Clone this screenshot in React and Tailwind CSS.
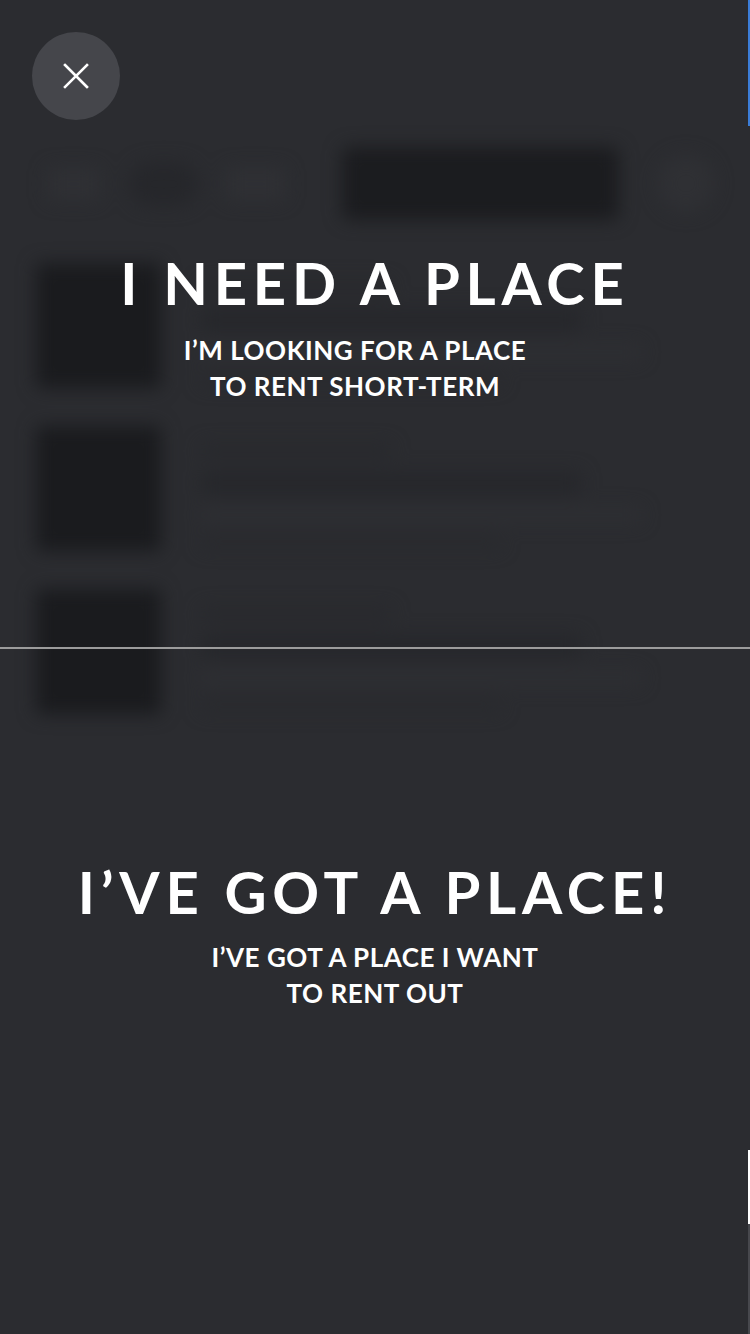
import React from 'react';

const rows = [0, 1, 2];

export default function App() {
    return (
        <div className="relative w-[750px] h-[1334px] overflow-hidden bg-[#2b2c30] font-['Lato',sans-serif]">
            {/* Blurred app behind the chooser */}
            <div className="blur-[9px] pt-[147px] px-[36px]">
                <div className="flex items-center h-[73px]">
                    <div className="w-[52px] h-[32px] ml-[12px] rounded bg-[#2f3034]"></div>
                    <div className="w-[71px] h-[44px] ml-[30px] rounded-full bg-[#26272b]"></div>
                    <div className="w-[60px] h-[32px] ml-[27px] rounded bg-[#2f3034]"></div>
                    <div className="w-[283px] h-[73px] ml-[57px] rounded-lg bg-[#1b1c1f]"></div>
                    <div className="w-[57px] h-[57px] ml-[39px] rounded-full bg-[#2f3034]"></div>
                </div>
                <div className="flex flex-col gap-[38px] mt-[43px]">
                    {rows.map((i) => (
                        <div key={i} className="flex gap-[40px]">
                            <div className="w-[125px] h-[125px] rounded bg-[#1a1b1e]"></div>
                            <div className="flex flex-col gap-[14px] pt-[18px]">
                                <div className="w-[190px] h-[14px] rounded bg-[#28292d]"></div>
                                <div className="w-[380px] h-[22px] rounded bg-[#26272b]"></div>
                                <div className="w-[440px] h-[14px] rounded bg-[#2e2f33]"></div>
                                <div className="w-[300px] h-[12px] rounded bg-[#292a2e]"></div>
                            </div>
                        </div>
                    ))}
                </div>
            </div>

            {/* Chooser overlay */}
            <div className="absolute inset-0 flex flex-col text-white">
                <button className="flex-none h-[647px] flex flex-col items-center justify-center pt-[10px]">
                    <h1 className="text-[58px] font-bold tracking-[0.1em] leading-none">I NEED A PLACE</h1>
                    <p className="mt-[20px] mr-[40px] text-[26px] font-bold tracking-[0.02em] leading-[36px]">
                        I’M LOOKING FOR A PLACE
                        <br />
                        TO RENT SHORT-TERM
                    </p>
                </button>
                <div className="h-[2px] bg-[#9c9c9c]"></div>
                <button className="flex-none h-[575px] flex flex-col items-center justify-center">
                    <h1 className="text-[58px] font-bold tracking-[0.1em] leading-none">I’VE GOT A PLACE!</h1>
                    <p className="mt-[18px] text-[26px] font-bold tracking-[0.02em] leading-[36px]">
                        I’VE GOT A PLACE I WANT
                        <br />
                        TO RENT OUT
                    </p>
                </button>
                <div className="flex-1"></div>
            </div>

            {/* Right edge slivers */}
            <div className="absolute right-0 top-0 w-[2px] h-[126px] bg-[#3b7dd8]"></div>
            <div className="absolute right-0 top-[1150px] w-[2px] h-[74px] bg-white"></div>
            <div className="absolute right-0 top-[1224px] w-[2px] h-[110px] bg-[#47484d]"></div>

            {/* Close button */}
            <button className="absolute top-[32px] left-[32px] w-[88px] h-[88px] rounded-full bg-[#45464b] flex items-center justify-center">
                <svg width="26" height="26" viewBox="0 0 26 26" fill="none" stroke="white" strokeWidth="2.6" strokeLinecap="square">
                    <path d="M2 2L24 24M24 2L2 24" />
                </svg>
            </button>
        </div>
    );
}
